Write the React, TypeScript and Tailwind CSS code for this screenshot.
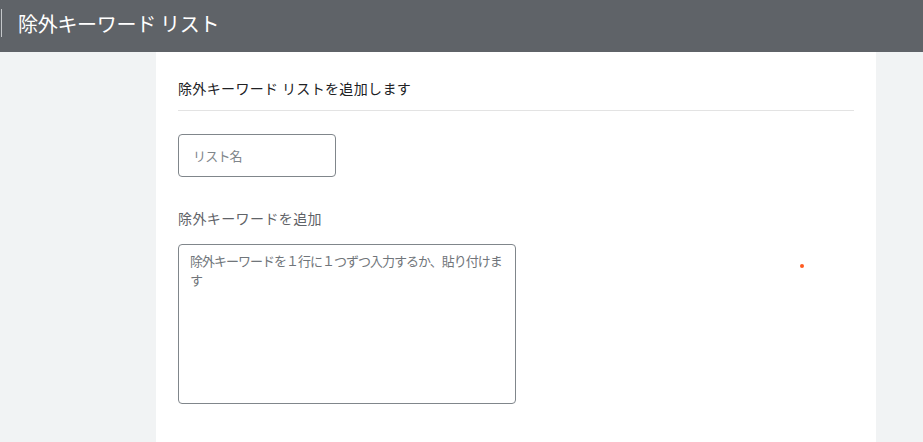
import React from "react";

export default function App() {
  const font = { fontFamily: '"Noto Sans CJK JP", "Noto Sans", sans-serif' };
  return (
    <div className="min-h-screen bg-[#f1f3f4] flex flex-col" style={font}>
      <header className="h-[52px] bg-[#5f6368] flex items-center shrink-0">
        <span className="ml-px w-px h-[28px] bg-[#c4c7ca] -mt-[6px]" />
        <h1 className="ml-[16px] text-[20px] leading-[26px] tracking-[-0.3px] text-white -mt-[4px]">
          除外キーワード リスト
        </h1>
      </header>
      <div className="flex-1 flex">
        <main className="relative ml-[156px] w-[720px] bg-white px-[22px] pt-[26px] h-[390px]">
          <div className="pb-[12px] border-b border-[#e3e3e3]">
            <h2 className="text-[14px] leading-[20px] text-[#202124] tracking-[0.35px]">
              除外キーワード リストを追加します
            </h2>
          </div>
          <input
            className="mt-[23px] block w-[158px] h-[43px] border border-[#80868b] rounded-[4px] pl-[14px] text-[13px] tracking-[-0.8px] placeholder:text-[#80868b] outline-none"
            placeholder="リスト名"
          />
          <div className="mt-[31px] text-[14px] leading-[20px] text-[#5f6368] tracking-[0.4px]">
            除外キーワードを追加
          </div>
          <textarea
            className="mt-[16px] block w-[338px] h-[160px] border border-[#80868b] rounded-[4px] pl-[11px] pr-[11px] pt-[6px] text-[13px] leading-[19px] tracking-[-1px] placeholder:text-[#70757a] outline-none resize-none"
            placeholder="除外キーワードを１行に１つずつ入力するか、貼り付けます"
          />
          <span className="absolute left-[644px] top-[212px] w-[4px] h-[4px] rounded-full bg-[#ff5a1f]" />
        </main>
      </div>
    </div>
  );
}
